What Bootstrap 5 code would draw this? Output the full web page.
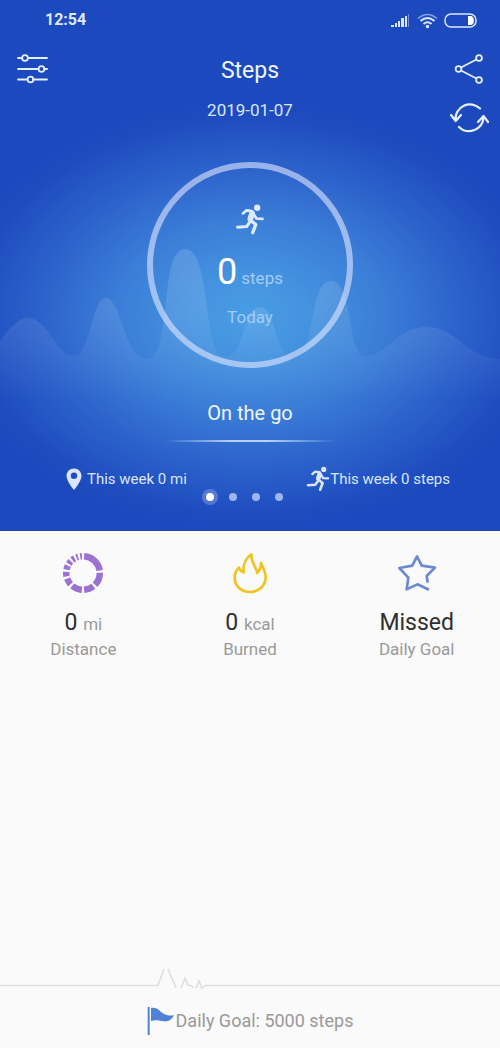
<!DOCTYPE html>
<html lang="en">
<head>
<meta charset="utf-8">
<meta name="viewport" content="width=device-width, initial-scale=1">
<title>Steps</title>
<link href="https://cdn.jsdelivr.net/npm/bootstrap@5.3.0/dist/css/bootstrap.min.css" rel="stylesheet">
<style>
  body { font-family: Roboto, "Liberation Sans", sans-serif; background: #fafafa; color: #2f2f2f; }
  svg { display: block; }
  .hero { background: radial-gradient(ellipse 300px 214px at 50% 316px, #4a9de5 0%, #4492e0 20%, #3b7dd7 45%, #2c62cb 70%, #1f4dc0 92%, #1c49bd 100%); color: #f0f6ff; }
  .wave { left: 0; top: 240px; width: 100%; height: 180px; }
  .status-bar { height: 40px; padding: 0 23px 0 45px; }
  .clock { font-size: 16px; line-height: 20px; font-weight: 700; color: #dfe9fd; }
  .title-bar { height: 58px; padding: 0 16px; }
  .page-title { font-size: 23px; line-height: 28px; font-weight: 400; padding-top: 3px; }
  .icon-btn { background: none; border: 0; padding: 0; color: #e6effe; }
  .date-row { height: 40px; padding: 0 10px; }
  .date-text { font-size: 17px; line-height: 24px; color: #d9e6fc; }
  .side { width: 40px; }
  .ring { width: 206px; height: 206px; margin-top: 24px; border: 6px solid rgba(226, 232, 255, .6); border-radius: 50%; padding-top: 36px; color: #dceafc; }
  .count { font-size: 36px; line-height: 40px; color: #fff; }
  .soft { font-size: 17px; line-height: 24px; color: #a3cbf3; }
  .count-row { margin-top: 17px; }
  .today { margin-top: 13px; }
  .mode { font-size: 20px; line-height: 28px; margin-top: 31px; }
  .glow { height: 2px; width: 172px; margin-top: 13px; background: linear-gradient(90deg, transparent, #b9d2f7 40%, #b9d2f7 60%, transparent); }
  .week { font-size: 15px; line-height: 24px; margin-top: 24px; padding: 0 50px 0 65px; color: #dbe6fd; }
  .dots { gap: 15px; height: 12px; margin-right: 12px; }
  .dots { margin-top: -1px; }
  .dot { width: 8px; height: 8px; border: 0; padding: 0; border-radius: 50%; background: #9db6f0; }
  .dot.active { background: #fff; box-shadow: 0 0 0 4px rgba(160, 180, 235, .4); }
  .hero-end { height: 28px; }
  .stats { padding-top: 20px; }
  .stat-value { font-size: 23px; line-height: 28px; margin-top: 14px; }
  .stat-unit { font-size: 17px; line-height: 20px; color: #9a9a9a; }
  .stat-label { font-size: 17px; line-height: 24px; color: #999; }
  .goal { font-size: 18px; line-height: 28px; height: 58px; padding-top: 4px; color: #999; }
</style>
</head>
<body>
<svg class="d-none" aria-hidden="true">
  <symbol id="runner" viewBox="34 26 88 92">
    <circle cx="99" cy="37" r="9.500" fill="currentColor"/>
    <g fill="none" stroke="currentColor" stroke-linecap="round" stroke-linejoin="round">
      <path stroke-width="8" d="M57 54 68 45 84 47M88 54 97 69 115 70"/>
      <path stroke-width="9" d="M77 80 68 93 41 95"/>
      <path stroke-width="17" d="M84 54 79 70"/>
      <path stroke-width="10" d="M79 74 95 87 86 111"/>
    </g>
  </symbol>
</svg>
<div class="d-flex flex-column min-vh-100">
  <header class="hero position-relative">
    <svg class="wave position-absolute" viewBox="0 240 500 180" preserveAspectRatio="none" aria-hidden="true">
      <defs><linearGradient id="fade" gradientUnits="userSpaceOnUse" x1="0" y1="249" x2="0" y2="400"><stop offset="0" stop-color="#fff" stop-opacity=".14"/><stop offset=".4" stop-color="#fff" stop-opacity=".1"/><stop offset="1" stop-color="#fff" stop-opacity="0"/></linearGradient></defs>
      <path fill="url(#fade)" d="M0 341C10 328 18 318 28 318C48 318 56 356 74 356C91 356 91 298 106 298C121 298 125 359 146 359C174 359 158 249 185 249C212 249 202 357 225 357C246 357 242 307 260 307C277 307 274 357 293 357C318 357 307 281 331 281C354 281 346 356 366 356C387 356 397 327 426 327C457 327 466 358 500 359V420H0Z"/>
    </svg>
    <div class="position-relative">
      <div class="status-bar d-flex align-items-center justify-content-between">
        <time class="clock">12:54</time>
        <svg width="87" height="18" viewBox="0 0 87 18" fill="none" stroke="#dbe6fd" aria-hidden="true">
          <path fill="#dbe6fd" stroke="none" d="M1 14h3v2H1zM5 12h2v4H5zM8 10h2v6H8zM11 7h3v9h-3zM15 5h2v11h-2z"/>
          <path d="M18.500 3v13" opacity=".45"/>
          <path stroke-width="1.500" opacity=".55" d="M28 7.500q9.500-8 19 0"/>
          <path stroke-width="2" d="M30.500 10q7-6 14 0M33.500 13q4-3.500 8 0"/>
          <circle cx="37.500" cy="15.500" r="1.800" fill="#dbe6fd" stroke="none"/>
          <rect x="55" y="3" width="31" height="13" rx="6" stroke-width="1.500"/>
          <path fill="#fff" stroke="none" d="M78 5h2.500a3 4 0 0 1 0 9H78z"/>
        </svg>
      </div>
      <div class="title-bar d-flex align-items-center justify-content-between">
        <button class="icon-btn side" type="button" aria-label="Settings">
          <svg width="34" height="32" viewBox="0 0 34 32" fill="none" stroke="currentColor" stroke-width="1.800"><path stroke-linecap="round" d="M2 5h4M12 5h19M2 16h20M28 16h3M2 26.500h9M17 26.500h14"/><circle cx="9" cy="5" r="2.900"/><circle cx="25.500" cy="16" r="2.900"/><circle cx="14.500" cy="26.500" r="2.900"/></svg>
        </button>
        <h1 class="page-title mb-0">Steps</h1>
        <button class="icon-btn side d-flex justify-content-end" type="button" aria-label="Share">
          <svg width="30" height="32" viewBox="0 0 30 32" fill="none" stroke="currentColor" stroke-width="1.800"><circle cx="4.500" cy="16" r="2.900"/><circle cx="25" cy="5" r="2.900"/><circle cx="25" cy="27" r="2.900"/><path d="M7 14.500 22.500 6.500M7 17.500l15.500 8"/></svg>
        </button>
      </div>
      <div class="date-row d-flex justify-content-between">
        <span class="side"></span>
        <time class="date-text" datetime="2019-01-07">2019-01-07</time>
        <button class="icon-btn side" type="button" aria-label="Sync">
          <svg width="40" height="40" viewBox="0 0 40 40" fill="none" stroke="currentColor" stroke-width="2.200" stroke-linecap="round" stroke-linejoin="round"><path d="M30 10.500A14.500 14.500 0 0 0 5.500 22M1 17l4.700 6L11 17M9 29A14.500 14.500 0 0 0 33.500 19M28 24l5.500-6 4.500 6"/></svg>
        </button>
      </div>
      <section class="ring mx-auto d-flex flex-column align-items-center">
        <svg width="30" height="31" aria-hidden="true"><use href="#runner"/></svg>
        <div class="count-row d-flex align-items-baseline gap-1"><span class="count">0</span><span class="soft">steps</span></div>
        <div class="soft today">Today</div>
      </section>
      <div class="mode text-center">On the go</div>
      <div class="glow mx-auto"></div>
      <div class="week d-flex justify-content-between">
        <span class="d-flex align-items-center gap-1"><svg width="18" height="24" viewBox="0 0 18 24" aria-hidden="true"><path fill="currentColor" fill-rule="evenodd" d="M9 1.500C4.500 1.500 1.500 5 1.500 9 1.500 14 9 23 9 23s7.500-9 7.500-14c0-4-3-7.500-7.500-7.500zM9 5.500a3.200 3.200 0 1 1 0 6.400 3.200 3.200 0 0 1 0-6.400z"/></svg>This week 0 mi</span>
        <span class="d-flex align-items-center"><svg width="24" height="26" aria-hidden="true"><use href="#runner"/></svg>This week 0 steps</span>
      </div>
      <nav class="dots d-flex justify-content-center align-items-center" aria-label="Pages">
        <button class="dot active" type="button" aria-label="Page 1"></button>
        <button class="dot" type="button" aria-label="Page 2"></button>
        <button class="dot" type="button" aria-label="Page 3"></button>
        <button class="dot" type="button" aria-label="Page 4"></button>
      </nav>
      <div class="hero-end"></div>
    </div>
  </header>
  <main class="stats row g-0 text-center flex-grow-1 align-content-start">
    <div class="col">
      <svg class="mx-auto" width="44" height="44" viewBox="-22 -22 44 44" aria-hidden="true"><circle r="16.800" fill="none" stroke="#9b72d3" stroke-width="6.500" pathLength="360" transform="rotate(-90)" stroke-dasharray="0 4 77 8 45 8 34 8 36 8 22 8 16 8 14 7 11 7 9 7 6 7 6 4"/></svg>
      <div class="stat-value">0 <span class="stat-unit">mi</span></div>
      <div class="stat-label">Distance</div>
    </div>
    <div class="col">
      <svg class="mx-auto" width="44" height="44" viewBox="57 32 132 132" fill="none" stroke="#f2c21f" stroke-width="8" stroke-linejoin="round" aria-hidden="true"><path d="M127 42C108 55 102 70 104 96 99 94 93 90 90 82 81 90 77 101 77 112 77 137 97 155 123 155S170 136 170 111C170 96 164 84 156 68 156 81 154 90 144 98 144 80 127 74 127 42Z"/></svg>
      <div class="stat-value">0 <span class="stat-unit">kcal</span></div>
      <div class="stat-label">Burned</div>
    </div>
    <div class="col">
      <svg class="mx-auto" width="44" height="44" viewBox="83 34 132 132" fill="none" stroke="#6b89d4" stroke-width="8" stroke-linejoin="round" aria-hidden="true"><path d="M181 129 178 109 203 84 163 78 149 50 135 78 96 85 123 114 118 149 150 134 185 150"/></svg>
      <div class="stat-value">Missed</div>
      <div class="stat-label">Daily Goal</div>
    </div>
  </main>
  <footer>
    <svg class="w-100" viewBox="0 0 500 24" fill="none" stroke="#dedede" stroke-width="1.600" aria-hidden="true"><path d="M0 19.500H158L164 3M168 3 176 22M181 22 185 12 188 19 192 20 193 22M196 22 199 15 202 22 205 19.500H500"/></svg>
    <div class="goal d-flex justify-content-center align-items-center"><svg width="29" height="30" viewBox="79 150 87 90" fill="#4f82d6" aria-hidden="true"><path d="M81 153h6v84h-6zM91 156C111 151 118 168 132 175 142 180 150 179 160 178 151 193 142 197 130 196 115 194 108 190 91 195z"/></svg>Daily Goal: 5000 steps</div>
  </footer>
</div>
<script src="https://cdn.jsdelivr.net/npm/bootstrap@5.3.0/dist/js/bootstrap.bundle.min.js"></script>
</body>
</html>
